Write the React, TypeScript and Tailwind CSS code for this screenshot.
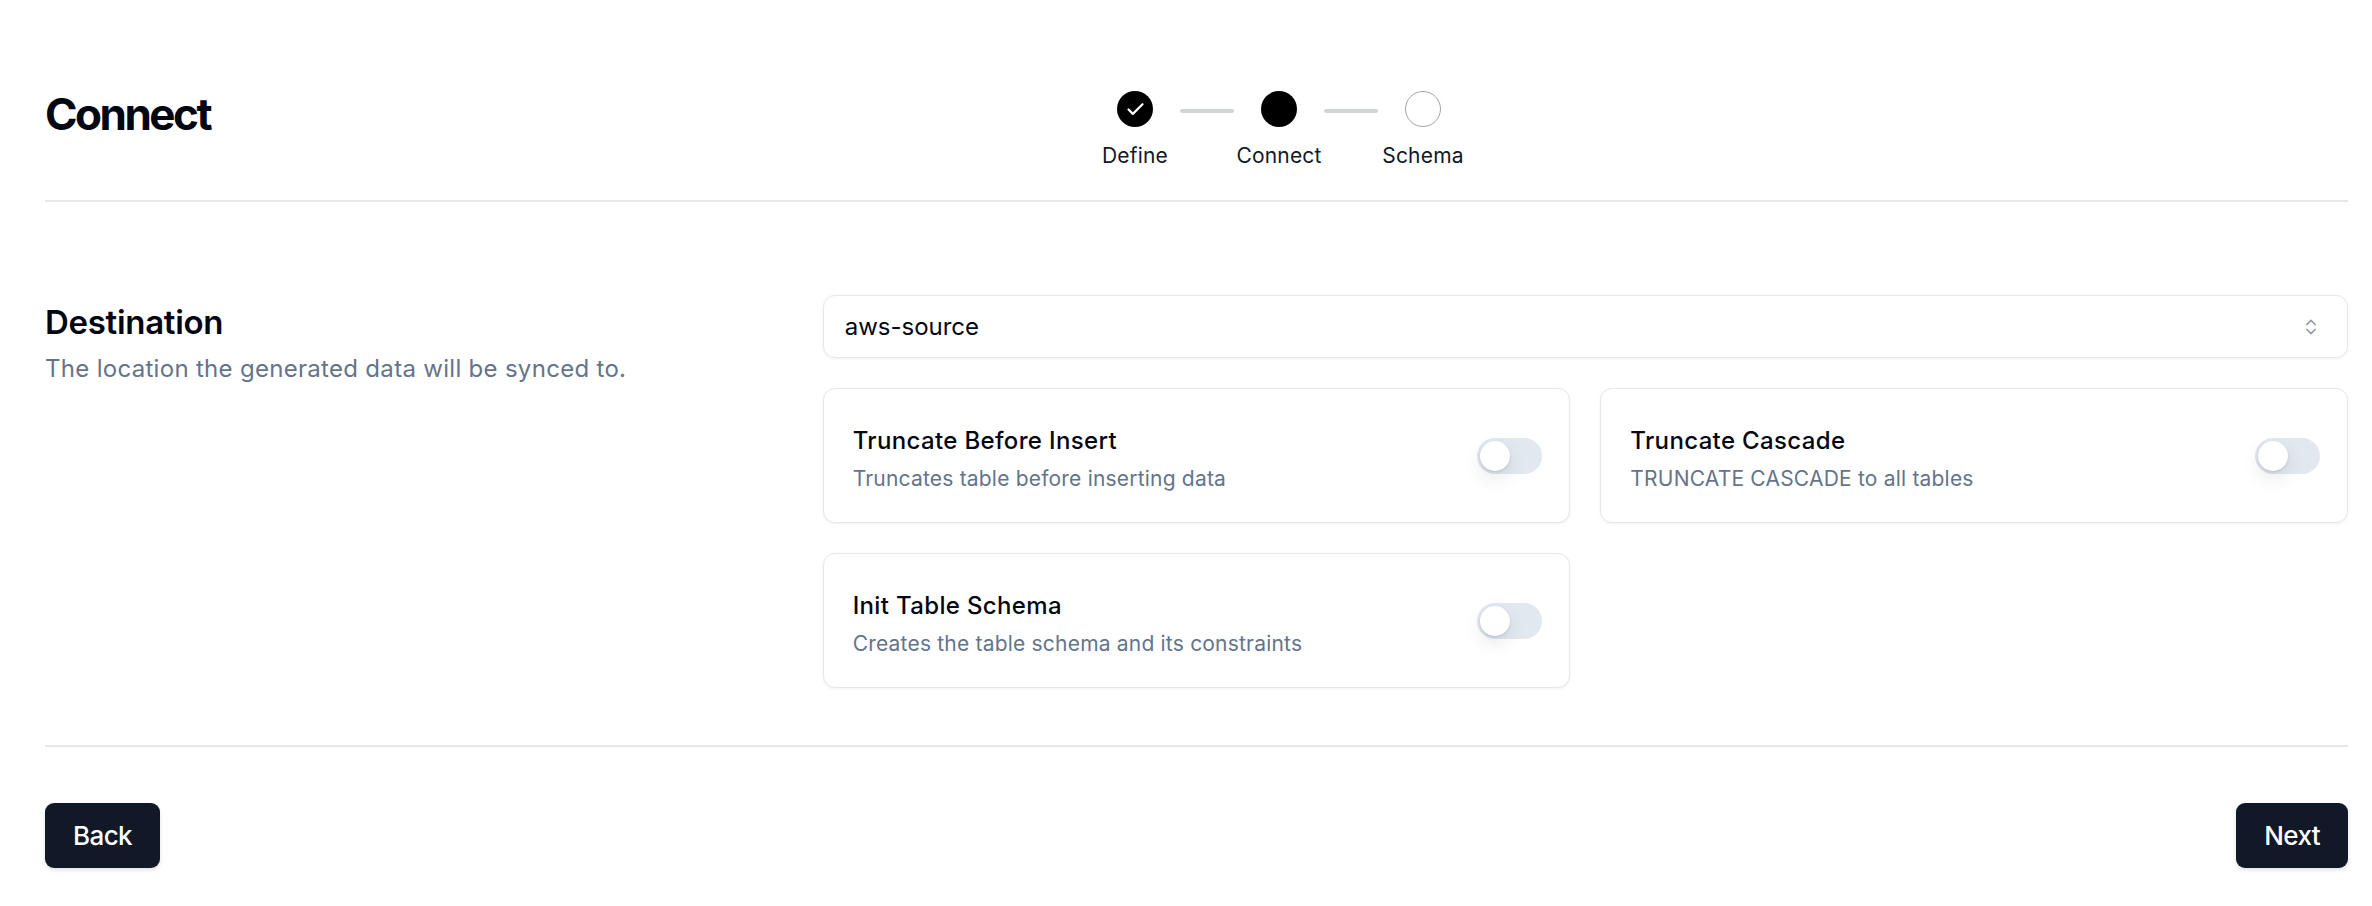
import React from "react";
import { Check, ChevronsUpDown } from "lucide-react";

function Step({ label, state }: { label: string; state: "done" | "current" | "todo" }) {
  return (
    <div className="flex w-[90px] flex-col items-center">
      {state === "done" && (
        <div className="flex h-[36px] w-[36px] items-center justify-center rounded-full bg-black">
          <Check size={21} strokeWidth={2.5} className="text-white" />
        </div>
      )}
      {state === "current" && <div className="h-[36px] w-[36px] rounded-full bg-black" />}
      {state === "todo" && (
        <div className="h-[36px] w-[36px] rounded-full border-[1.5px] border-[#9ca3af] bg-white" />
      )}
      <div className="mt-[14px] whitespace-nowrap text-[21px] leading-[30px] tracking-[0.2px] text-[#111827]">{label}</div>
    </div>
  );
}

function Line() {
  return <div className="mt-[18px] h-[4px] w-[54px] shrink-0 rounded-full bg-[#d1d5db]" />;
}

function Toggle() {
  return (
    <div className="relative h-[36px] w-[65px] shrink-0 rounded-full bg-[#e2e8f0]">
      <div className="absolute left-[3px] top-[3px] h-[30px] w-[30px] rounded-full bg-white shadow-[0_8px_20px_-2px_rgba(0,0,0,0.12),0_1px_3px_rgba(0,0,0,0.12)]" />
    </div>
  );
}

function OptionCard({ title, desc }: { title: string; desc: string }) {
  return (
    <div className="flex h-[135px] items-center justify-between rounded-[12px] border border-[#e5e7eb] bg-white pl-[29px] pr-[27px] shadow-[0_1px_3px_rgba(0,0,0,0.06)]">
      <div className="pt-[8px]">
        <div className="text-[24px] font-medium leading-[32px] tracking-[0.35px] text-[#030712]">{title}</div>
        <div className="mt-[7px] text-[21px] leading-[30px] tracking-[0.2px] text-[#64748b]">{desc}</div>
      </div>
      <Toggle />
    </div>
  );
}

export default function App() {
  return (
    <div className="min-h-screen bg-white pl-[45px] pr-[24px] font-['Inter',sans-serif]">
      <div className="flex items-start justify-between border-b-2 border-[#e5e7eb] pb-[29px] pt-[88px]">
        <h1 className="text-[44px] font-bold leading-[52px] tracking-[-2.5px] text-[#030712]">Connect</h1>
        <div className="mt-[3px] flex items-start">
          <Step label="Define" state="done" />
          <Line />
          <Step label="Connect" state="current" />
          <Line />
          <Step label="Schema" state="todo" />
        </div>
        <div />
      </div>

      <div className="grid grid-cols-3 gap-x-[30px] border-b-2 border-[#e5e7eb] pb-[57px] pt-[93px]">
        <div className="pt-[7px]">
          <h2 className="text-[33px] font-semibold leading-[40px] tracking-[-0.3px] text-[#030712]">Destination</h2>
          <p className="mt-[11px] text-[24px] leading-[32px] tracking-[0.3px] text-[#64748b]">
            The location the generated data will be synced to.
          </p>
        </div>
        <div className="col-span-2 flex flex-col gap-[30px]">
          <div className="flex h-[63px] items-center justify-between rounded-[12px] border border-[#e5e7eb] bg-white pl-[21px] pr-[26px] shadow-[0_1px_3px_rgba(0,0,0,0.06)]">
            <span className="text-[24px] leading-[32px] text-[#030712]">aws-source</span>
            <ChevronsUpDown size={20} strokeWidth={2} className="text-[#6b7280] opacity-70" />
          </div>
          <div className="grid grid-cols-2 gap-[30px]">
            <OptionCard title="Truncate Before Insert" desc="Truncates table before inserting data" />
            <OptionCard title="Truncate Cascade" desc="TRUNCATE CASCADE to all tables" />
            <OptionCard title="Init Table Schema" desc="Creates the table schema and its constraints" />
          </div>
        </div>
      </div>

      <div className="flex items-start justify-between pt-[56px]">
        <button className="h-[65px] rounded-[9px] bg-[#111827] px-[28px] text-[26px] font-medium leading-[40px] tracking-[-0.6px] text-white shadow-[0_2px_4px_rgba(0,0,0,0.12)]">
          Back
        </button>
        <button className="h-[65px] rounded-[9px] bg-[#111827] px-[28px] text-[26px] font-medium leading-[40px] tracking-[-0.6px] text-white shadow-[0_2px_4px_rgba(0,0,0,0.12)]">
          Next
        </button>
      </div>
    </div>
  );
}
